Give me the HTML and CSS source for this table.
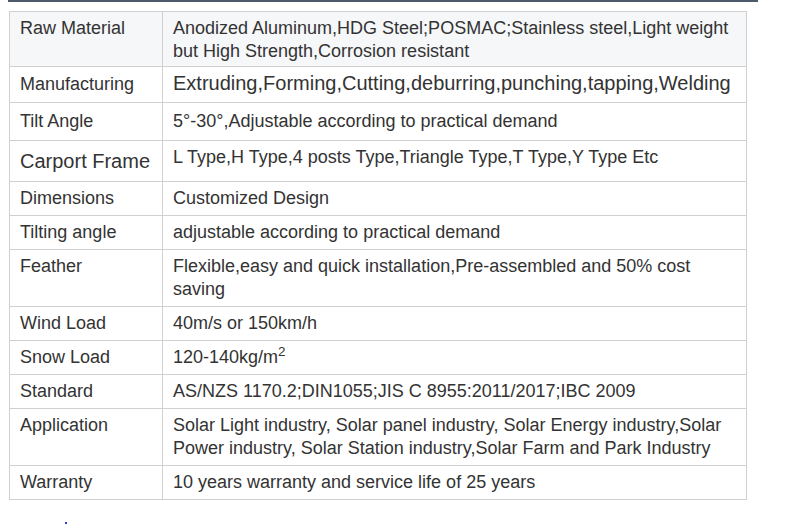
FILE: index.html
```html
<!DOCTYPE html>
<html lang="en">
<head>
<meta charset="utf-8">
<title>Specifications</title>
<link rel="stylesheet" href="styles.css">
</head>
<body>
<div class="page">
  <div class="topbar"></div>
  <table class="spec">
    <colgroup><col class="col-label"><col class="col-value"></colgroup>
    <tbody>
      <tr class="shaded"><td>Raw Material</td><td>Anodized Aluminum,HDG Steel;POSMAC;Stainless steel,Light weight but High Strength,Corrosion resistant</td></tr>
      <tr class="row-mfg"><td>Manufacturing</td><td><span class="big">Extruding,Forming,Cutting,deburring,punching,tapping,Welding</span></td></tr>
      <tr class="row-tilt"><td>Tilt Angle</td><td>5°-30°,Adjustable according to practical demand</td></tr>
      <tr><td><span class="big-block">Carport Frame</span></td><td>L Type,H Type,4 posts Type,Triangle Type,T Type,Y Type Etc</td></tr>
      <tr><td>Dimensions</td><td>Customized Design</td></tr>
      <tr><td>Tilting angle</td><td>adjustable according to practical demand</td></tr>
      <tr><td>Feather</td><td>Flexible,easy and quick installation,Pre-assembled and 50% cost saving</td></tr>
      <tr><td>Wind Load</td><td>40m/s or 150km/h</td></tr>
      <tr><td>Snow Load</td><td>120-140kg/m<sup>2</sup></td></tr>
      <tr><td>Standard</td><td>AS/NZS 1170.2;DIN1055;JIS C 8955:2011/2017;IBC 2009</td></tr>
      <tr><td>Application</td><td>Solar Light industry, Solar panel industry, Solar Energy industry,Solar Power industry, Solar Station industry,Solar Farm and Park Industry</td></tr>
      <tr><td>Warranty</td><td>10 years warranty and service life of 25 years</td></tr>
    </tbody>
  </table>
  <div class="after"><span class="mark"></span></div>
</div>
</body>
</html>
```

FILE: styles.css
```css
html, body {
  margin: 0;
  padding: 0;
  background: #ffffff;
}

.page {
  padding-left: 8px;
  font-family: "Liberation Sans", Arial, sans-serif;
  font-size: 18px;
  color: #333333;
}

.topbar {
  width: 750px;
  height: 2px;
  background: #4d5a6b;
}

.spec {
  margin: 9px 0 0 1px;
  width: 738px;
  border-collapse: collapse;
  table-layout: fixed;
}

.col-label { width: 153px; }

.spec td {
  border: 1px solid #d0d0d0;
  padding: 5px 10px;
  line-height: 23px;
  vertical-align: top;
  text-align: left;
}

.shaded td {
  background: #f6f7f9;
  padding-top: 5px;
  padding-bottom: 3px;
}

.big {
  font-size: 20px;
  line-height: 23px;
}

.row-mfg td {
  line-height: 25px;
}

.row-mfg .big {
  line-height: 23px;
}

.big-block {
  display: block;
  font-size: 20px;
  line-height: 30px;
}

.row-tilt td {
  line-height: 27px;
}

sup {
  font-size: 75%;
  line-height: 0;
  position: relative;
  vertical-align: baseline;
  top: -0.5em;
}

.after {
  padding: 22px 0 0 57px;
}

.mark {
  display: block;
  width: 2px;
  height: 2px;
  background: #2b3fe0;
}
```
